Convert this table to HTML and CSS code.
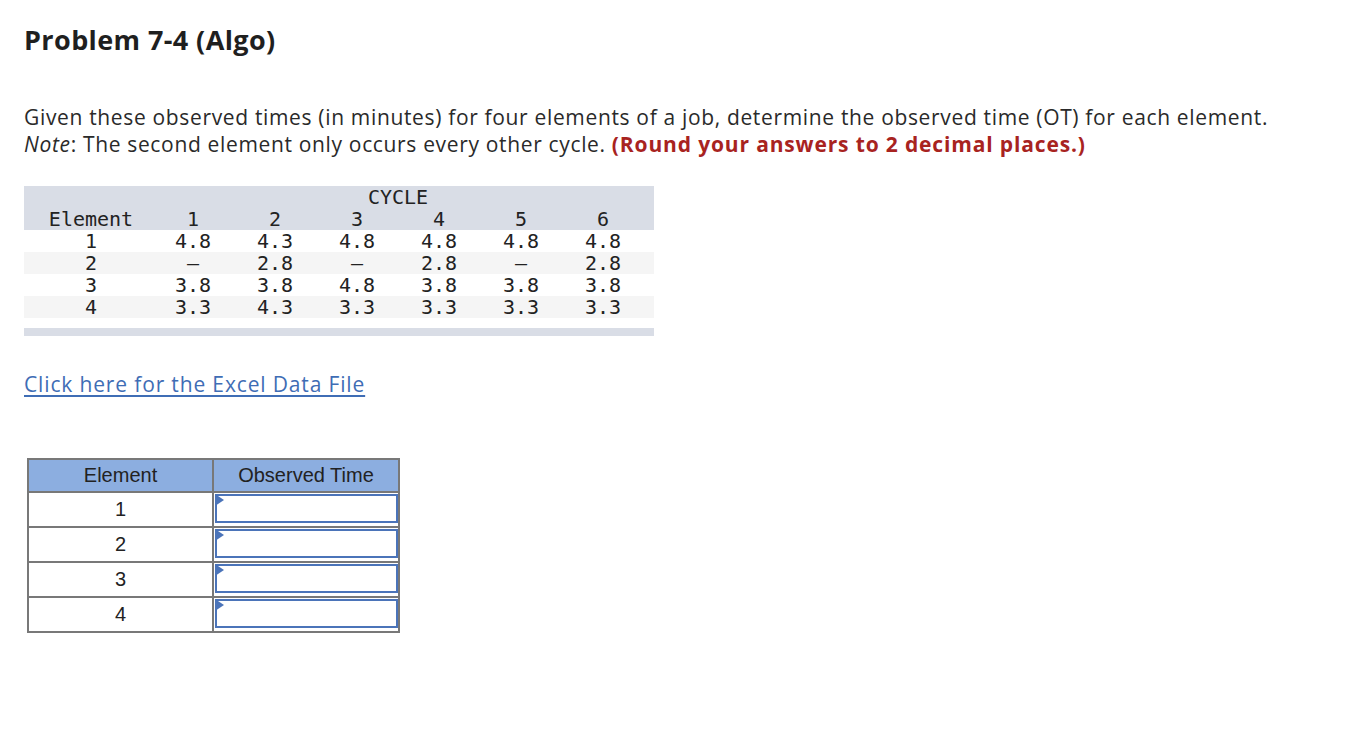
FILE: index.html
```html
<!DOCTYPE html>
<html>
<head>
<meta charset="utf-8">
<link rel="stylesheet" href="styles.css">
</head>
<body>
<div class="page">
  <h1 class="title">Problem 7-4 (Algo)</h1>
  <p class="prompt">Given these observed times (in minutes) for four elements of a job, determine the observed time (OT) for each element.<br><em>Note</em>: The second element only occurs every other cycle. <strong class="warn">(Round your answers to 2 decimal places.)</strong></p>

  <div class="data">
    <table class="obs">
      <colgroup><col class="c0"><col class="c"><col class="c"><col class="c"><col class="c"><col class="c"><col class="c"><col class="pad"></colgroup>
      <thead>
        <tr><th></th><th colspan="6">CYCLE</th><th></th></tr>
        <tr><th class="el">Element</th><th>1</th><th>2</th><th>3</th><th>4</th><th>5</th><th>6</th><th></th></tr>
      </thead>
      <tbody>
        <tr><td class="el">1</td><td>4.8</td><td>4.3</td><td>4.8</td><td>4.8</td><td>4.8</td><td>4.8</td><td></td></tr>
        <tr class="alt"><td class="el">2</td><td>–</td><td>2.8</td><td>–</td><td>2.8</td><td>–</td><td>2.8</td><td></td></tr>
        <tr><td class="el">3</td><td>3.8</td><td>3.8</td><td>4.8</td><td>3.8</td><td>3.8</td><td>3.8</td><td></td></tr>
        <tr class="alt"><td class="el">4</td><td>3.3</td><td>4.3</td><td>3.3</td><td>3.3</td><td>3.3</td><td>3.3</td><td></td></tr>
      </tbody>
    </table>
    <div class="foot"></div>
  </div>

  <a class="link" href="#">Click here for the Excel Data File</a>

  <table class="answer">
    <thead>
      <tr><th>Element</th><th>Observed Time</th></tr>
    </thead>
    <tbody>
      <tr><td>1</td><td class="in"><div class="box"></div></td></tr>
      <tr><td>2</td><td class="in"><div class="box"></div></td></tr>
      <tr><td>3</td><td class="in"><div class="box"></div></td></tr>
      <tr><td>4</td><td class="in"><div class="box"></div></td></tr>
    </tbody>
  </table>
</div>
</body>
</html>
```

FILE: styles.css
```css
html, body { margin: 0; padding: 0; background: #fff; }
body { font-family: "Open Sans", "Liberation Sans", sans-serif; color: #222; }
.page { padding: 21px 24px 0 24px; }

.title {
  margin: 0;
  font-size: 27px;
  line-height: 38px;
  font-weight: 700;
  letter-spacing: 0.4px;
  color: #1f1f1f;
}

.prompt {
  margin: 45px 0 0 0;
  font-size: 21px;
  line-height: 27px;
  letter-spacing: 0.66px;
  color: #2a2a2a;
}
.prompt em { font-style: italic; }
.warn { color: #a8231f; font-weight: 700; letter-spacing: 0.85px; }

.data { width: 630px; margin-top: 28px; }
.obs {
  border-collapse: collapse;
  font-family: "DejaVu Sans Mono", monospace;
  font-size: 20px;
  color: #222;
  table-layout: fixed;
  width: 630px;
}
.obs .c0 { width: 128px; }
.obs .c { width: 82px; }
.obs .pad { width: 10px; }
.obs th, .obs td {
  padding: 0;
  height: 22px;
  line-height: 22px;
  font-weight: 400;
  text-align: center;
}
.obs .el { padding-left: 6px; }
.obs thead tr { background: #d9dde6; }
.obs tbody tr.alt { background: #f5f5f5; }
.foot { height: 8px; margin-top: 10px; background: #d9dde6; }

.link {
  display: inline-block;
  margin-top: 35px;
  font-size: 21px;
  line-height: 27px;
  letter-spacing: 0.85px;
  color: #3f6db5;
  text-decoration: underline;
  text-underline-offset: 3px;
}

.answer {
  margin: 60px 0 0 3px;
  border-collapse: collapse;
  font-family: "Liberation Sans", Arial, sans-serif;
  font-size: 20px;
  color: #222;
}
.answer th, .answer td {
  border: 2px solid #787878;
  width: 183px;
  padding: 0;
  text-align: center;
  font-weight: 400;
}
.answer th { height: 31px; background: #8caee0; }
.answer td { height: 31px; }
.answer td.in { position: relative; padding: 1px 0 1px 1px; vertical-align: top; }
.answer .box {
  height: 25px;
  border: 2px solid #4b74b9;
}
.answer td.in::before {
  content: "";
  position: absolute;
  left: 1px;
  top: 1px;
  width: 0; height: 0;
  border-top: 6px solid transparent;
  border-bottom: 6px solid transparent;
  border-left: 9px solid #4b74b9;
}
```
